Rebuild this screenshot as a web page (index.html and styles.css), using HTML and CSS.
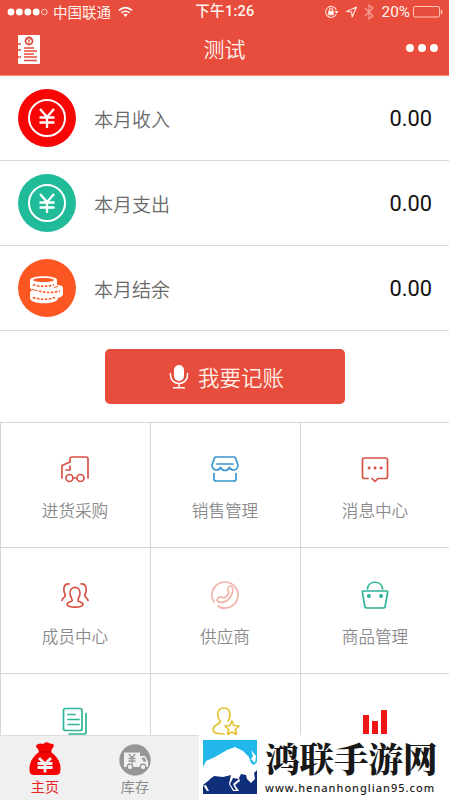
FILE: index.html
```
<!DOCTYPE html>
<html lang="zh-CN">
<head>
<meta charset="utf-8">
<title>测试</title>
<link rel="stylesheet" href="styles.css">
</head>
<body>
<div class="app">
  <header class="header">
    <div class="status">
      <div class="carrier">
        <svg width="41" height="10" viewBox="0 0 41 10"><g fill="#fff"><circle cx="4" cy="5" r="3.4"/><circle cx="12.4" cy="5" r="3.4"/><circle cx="20.8" cy="5" r="3.4"/><circle cx="29.2" cy="5" r="3.4"/></g><circle cx="37.4" cy="5" r="2.8" fill="none" stroke="#ffd9ca"/></svg>
        <span>中国联通</span>
        <svg class="wifi" width="15" height="12" viewBox="0 0 16 12" fill="none" stroke="#fff" stroke-width="1.8"><path d="M1 4.3Q8-1.800 15 4.300M3.600 7Q8 3.400 12.400 7"/><path d="M5.600 8.700Q8 7 10.400 8.700L8 11.300z" fill="#fff" stroke="none"/></svg>
      </div>
      <div class="time">下午1:26</div>
      <div class="indicators">
        <svg width="15" height="14" viewBox="0 0 15 14" fill="none" stroke="#ffe2d8" stroke-width="1.1"><path d="M12 9.500A5.500 5.500 0 1 1 12.300 5"/><path d="M10.500 6h4l-2 3z" fill="#ffe2d8" stroke="none"/><path d="M4.700 6.300h4.600v3.500H4.700z" fill="#fff"/><path d="M5.500 6V4.700a1.500 1.500 0 0 1 3 0V6"/></svg>
        <svg class="location" width="13" height="12" viewBox="0 0 12 12" fill="none" stroke="#ffe2d8" stroke-width="1.2" stroke-linejoin="round"><path d="M1 5.500 11 1 6.700 11 6 6z"/></svg>
        <svg class="bluetooth" width="10" height="16" viewBox="0 0 10 16" fill="none" stroke="#f5a498" stroke-width="1.1"><path d="m1 4 8 8-4 3V1l4 3-8 8"/></svg>
        <span class="percent">20%</span>
        <svg width="30" height="12" viewBox="0 0 30 12" fill="none" stroke="#ffc6b5"><rect x=".5" y=".5" width="26" height="10.500" rx="1.500"/><path d="M28.500 4v4" stroke-width="1.500"/></svg>
      </div>
    </div>
    <div class="nav">
      <svg class="ledger" width="22" height="29" viewBox="0 0 22 29"><path fill="#fff" d="M0 1q0-1 1-1h20q1 0 1 1v27q0 1-1 1H1q-1 0-1-1z"/><circle cx="11" cy="6" r="3.500" fill="#fff" stroke="#d9483a" stroke-width="1.800"/><path stroke="#e74c3c" d="m9.500 4 1.500 2 1.500-2M11 6v2.500" fill="none"/><path stroke="#e74c3c" stroke-width="1.700" d="M0 9h3m-3 6h3m-3 7h3m3-9h10M6 16h13M6 19h10M6 22h13M6 25.500h13"/></svg>
      <h1>测试</h1>
      <div class="more"><i></i><i></i><i></i></div>
    </div>
  </header>

  <section class="summary">
    <div class="row">
      <svg width="58" height="58" viewBox="0 0 58 58" fill="none" stroke="#fff" stroke-width="2"><circle cx="29" cy="29" r="29" fill="#f80505" stroke="none"/><circle cx="29" cy="29" r="18"/><path stroke-width="2.300" d="m22 20 7 8 7-8M21.500 28.500h15M21.500 33.500h15M29 28v11"/></svg>
      <span>本月收入</span><b>0.00</b>
    </div>
    <div class="row">
      <svg width="58" height="58" viewBox="0 0 58 58" fill="none" stroke="#fff" stroke-width="2"><circle cx="29" cy="29" r="29" fill="#20bb99" stroke="none"/><circle cx="29" cy="29" r="18"/><path stroke-width="2.300" d="m22 20 7 8 7-8M21.500 28.500h15M21.500 33.500h15M29 28v11"/></svg>
      <span>本月支出</span><b>0.00</b>
    </div>
    <div class="row">
      <svg width="58" height="58" viewBox="0 0 58 58"><circle cx="29" cy="29" r="29" fill="#fc5722"/><path fill="#fff" d="M12 21c0-5 27-5 27 0v5c4 0 6 1 6 3v6c0 2-2 3-5 4 0 7-28 7-28 0v-6l2-2-2-2z"/><g fill="none" stroke="#fc5722" stroke-width="1.700"><ellipse cx="25.500" cy="21" rx="10" ry="1.500" fill="#fc5722" stroke-width="1"/><path stroke-dasharray="2.500 1.500" d="M15 25.800q10.500 3 21 0M21 32q11 3 21 0M15 38.500q11 3.500 22 0"/><path stroke-width="1" d="M14 30q2 1.500 5.500 1.500M36 28.500l4-1"/></g></svg>
      <span>本月结余</span><b>0.00</b>
    </div>
  </section>

  <div class="action">
    <button class="record">
      <svg width="20" height="25" viewBox="0 0 20 25" fill="none" stroke="#fff" stroke-width="1.500"><rect x="5" y="1" width="10" height="16" rx="5" fill="#fff" stroke="none"/><path d="M1.500 9v2.500a8.500 8 0 0 0 17 0V9M10 19.500v4M4 23.700h12"/></svg>
      我要记账
    </button>
  </div>

  <main class="grid">
    <div class="cell">
      <svg class="red" viewBox="0 0 30 30"><path d="M2 24V11.500l8-3.500V5q0-2 2-2h14q2 0 2 2v19M6 16h4v-4"/><circle cx="9.500" cy="24" r="3.500"/><circle cx="20.500" cy="24" r="3.500"/><path d="M13 24h4"/></svg>
      <span>进货采购</span>
    </div>
    <div class="cell">
      <svg class="blue" viewBox="0 0 30 30"><path d="M6 3h18q1 0 1.500 1L28 11c0 3-2 5-4.300 5-2 0-3.500-1-4.300-2.500-1 2-2.500 3-4.400 3s-3.400-1-4.400-3C9.800 15 8.300 16 6.300 16 4 16 2 14 2 11l2.500-7Q5 3 6 3zM7 10h16M4 19.500V25q0 2 2 2h18q2 0 2-2v-5.500"/></svg>
      <span>销售管理</span>
    </div>
    <div class="cell">
      <svg class="red" viewBox="0 0 30 30"><path d="M8 24.500H4.500q-2 0-2-2V6q0-2 2-2h21q2 0 2 2v16.500q0 2-2 2H18l-3 3-3-3"/><path d="M9 14h.2M15 14h.2M21 14h.2" stroke-width="2.800"/></svg>
      <span>消息中心</span>
    </div>
    <div class="cell">
      <svg class="red" viewBox="0 0 30 30"><path d="M12 21c1-2-2-3.500-2-8C10 5.500 20 5.500 20 13c0 4.500-3 6-2 8 1 1 5 1 5 3.500 0 3.500-16 3.500-16 0C7 22 11 22 12 21zM9 4C3 3.500 3 10.500 5 14.500c1.500 3-3 3-3 6M21 4c6-.5 6 6.500 4 10.500-1.500 3 3 3 3 6"/></svg>
      <span>成员中心</span>
    </div>
    <div class="cell">
      <svg class="pink" viewBox="0 0 30 30"><path d="M4 22A13 13 0 1 1 8 26M11 28a13 13 0 0 0 4 .2"/><path d="M7 20c2 4 10 3 14-4 3-5 2-10-1-10-3 1-3 5-1 6-1 4-4 6-6 6-2-2-5-1-6 2z"/></svg>
      <span>供应商</span>
    </div>
    <div class="cell">
      <svg class="green" viewBox="0 0 30 30"><path d="M3 11h24q.8 0 .7 1l-2.500 14q-.3 2-2.200 2H7q-1.900 0-2.200-2L2.300 12q-.1-1 .7-1zM7.500 9C8 0 22 0 22.500 9"/><path stroke-width="3.800" d="M8.800 16H9M21 16h.2"/></svg>
      <span>商品管理</span>
    </div>
    <div class="cell">
      <svg class="green" viewBox="0 0 30 30"><rect x="3.500" y="2.500" width="18.500" height="22" rx="2"/><path d="M8 8.500h7M8 13.500h11M8 18.500h11M26 7.500V26q0 2-2 2H9"/></svg>
    </div>
    <div class="cell">
      <svg class="yellow" viewBox="0 0 30 30"><path d="M18 15c3-4 3-13-4-13-8 0-7 9-4 13 2 3-7 3-7 9 0 3 4 4 11 4M22 15l2 4.500 5 .5-3.700 3.500 1 5L22 26l-4.300 2.500 1-5L15 20l5-.5z"/></svg>
    </div>
    <div class="cell">
      <svg class="bars" viewBox="0 0 30 30"><path d="M3 9h6v19H3zM12 15h6v13h-6zM21 4h6v24h-6z"/></svg>
    </div>
  </main>

  <footer class="bottom">
    <nav class="tabs">
      <div class="tab active">
        <svg width="32" height="34" viewBox="0 0 32 34"><path fill="#f60303" d="M9 2q3-1 5 0 3-3 6-1 2 1 4 1 2 2-1 5l-1 3c7 5 11 12 9 21q-1 2-4 2H5q-3 0-4-2C-1 22 3 15 10 10L9 7Q5 4 9 2z"/><path fill="none" stroke="#f0f0f0" stroke-width="2.800" d="m10 16 6 6 6-6M8.500 21.500h15M8.500 25.500h15M16 22v8.500"/><path stroke="#b00" d="M10 10h12"/></svg>
        <span>主页</span>
      </div>
      <div class="tab">
        <svg width="32" height="34" viewBox="0 0 32 34"><circle cx="16" cy="18" r="15.700" fill="#969696"/><path fill="#f0f0f0" d="M5 10.500h16v3.500h5l3 5v6H5z"/><path fill="none" stroke="#969696" stroke-width="1.300" d="m10 12 3 4 3-4M9.500 16.500h7M9.500 19h7M13 16v5.500"/><path fill="#969696" d="M22.500 15.500h3l2 4h-3z"/><g fill="#f0f0f0" stroke="#969696" stroke-width="1.300"><circle cx="11" cy="25" r="2.800"/><circle cx="24" cy="25" r="2.800"/></g></svg>
        <span>库存</span>
      </div>
    </nav>
    <aside class="brand">
      <svg width="54" height="54" viewBox="0 0 54 54"><path fill="#21b7ea" d="M0 0h54v36H0z"/><path fill="#102f7b" d="M0 30h3v-4h51v28H0z"/><path fill="#fff" d="M0 27 3 21 12 17 24 10 32 7l8 4 6 6 2 6 3 2 3-3v8l-3 3 1 6-4 4-4-4-1-4-5-1-2 4 1 3-5 4 4 6h-6l-4-7 2-9-8 2-9-1-6 5-5 4 4 6H6l-3-6-3 1z"/><path fill="#fff" d="m48 10 5 6-1 7-4-4 2-3z"/><path fill="#102f7b" d="m8 38 5 1-6 5 3 6H8l-4-6zM30 38l6 1-6 5 3 6h-2l-4-6z"/></svg>
      <div class="brand-text"><strong>鸿联手游网</strong><span>www.henanhonglian95.com</span></div>
    </aside>
  </footer>
</div>
</body>
</html>
```

FILE: styles.css
```
* { box-sizing: border-box; }
body { margin: 0; background: #fff; font-family: "Noto Sans CJK SC", sans-serif; }
svg { display: block; flex: none; }
.app { width: 449px; height: 800px; display: flex; flex-direction: column; overflow: hidden; }
.header { height: 76px; flex: none; background: #e74c3c; color: #fff5ee; border-bottom: 1px solid #f08b76; }
.status { height: 24px; display: grid; grid-template-columns: 1fr auto 1fr; align-items: center; padding: 0 6px 0 7px; font-size: 14.5px; line-height: 24px; }
.carrier, .indicators { display: flex; align-items: center; }
.carrier span { margin: 0 7px 0 5px; }
.time { font-family: Roboto, "Noto Sans CJK SC", sans-serif; font-size: 14.5px; font-weight: 500; letter-spacing: .3px; }
.indicators { justify-content: flex-end; }
.location { margin-left: 6px; }
.bluetooth { margin: 0 8px 0 6px; }
.percent { font-family: Roboto, sans-serif; margin-right: 3px; font-size: 15.3px; }
.nav { height: 50px; display: grid; grid-template-columns: 1fr auto 1fr; align-items: center; padding: 0 11px 0 18px; }
h1 { margin: -2px 0 0 -7px; font-size: 21px; line-height: 30px; font-weight: 350; }
.more { display: flex; gap: 4px; justify-self: end; margin-top: -2px; }
.more i { width: 8px; height: 8px; border-radius: 50%; background: #fff; }
.summary { flex: none; }
.row { height: 85px; display: flex; align-items: center; padding: 0 17px 1px 18px; border-bottom: 1px solid #d9d9d9; }
.row span { margin-left: 18px; font-size: 19px; line-height: 28px; font-weight: 350; color: #6a6a6a; padding-top: 2px; }
.row b { margin-left: auto; font: 400 21.8px/26px Roboto, sans-serif; color: #111; padding-top: 3px; }
.action { height: 91px; flex: none; padding-top: 18px; display: flex; justify-content: center; align-items: flex-start; }
.record { width: 240px; height: 55px; border: 0; border-radius: 5px; background: #e74c3c; color: #fff1e9; font: 350 21.5px/30px "Noto Sans CJK SC", sans-serif; display: flex; align-items: center; justify-content: center; gap: 9px; padding: 0 0 0 4px; }
.grid { height: 313px; flex: none; overflow: hidden; display: grid; grid-template-columns: 151px 150px 148px; grid-template-rows: 125px 126px 126px; border-top: 1px solid #d6d6d6; }
.cell { display: flex; flex-direction: column; align-items: center; padding-top: 32px; border-right: 1px solid #d6d6d6; border-bottom: 1px solid #d6d6d6; }
.cell:nth-child(3n+1) { border-left: 1px solid #d6d6d6; padding-right: 1px; }
.cell:nth-child(3n+2) { padding-right: 1px; }
.cell:nth-child(3n) { border-right: 0; }
.cell:nth-child(-n+3) { padding-top: 31px; }
.cell svg { width: 30px; height: 30px; fill: none; stroke: currentColor; stroke-width: 1.7; stroke-linecap: round; stroke-linejoin: round; }
.cell span { margin-top: 14px; font-size: 16.6px; line-height: 25px; font-weight: 350; color: #8a8a8c; }
.cell .red { color: #d95246; }
.cell .blue { color: #3995ce; }
.cell .pink { color: #f0b5aa; }
.cell .green { color: #2eb498; }
.cell .yellow { color: #e4c331; }
.cell .bars { fill: #ed1515; stroke: none; }
.bottom { height: 65px; flex: none; display: flex; background: #fff; }
.tabs { width: 199px; display: flex; background: #f0f0f0; border-top: 1px solid #dcdcdc; }
.tab { width: 90px; display: flex; flex-direction: column; align-items: center; padding-top: 6px; color: #8d8d8d; font-size: 14.2px; line-height: 20px; }
.tab.active { color: #e82121; }
.brand { flex: 1; display: flex; padding: 5px 0 0 4px; }
.brand-text { margin-left: 8px; display: flex; flex-direction: column; white-space: nowrap; }
.brand-text strong { font: 900 34.5px/34px "Noto Serif CJK SC", "Noto Sans CJK SC", serif; color: #181818; }
.brand-text span { font: 500 11px/14px "Noto Sans", sans-serif; letter-spacing: 1px; color: #222; margin-top: 7px; }
```
